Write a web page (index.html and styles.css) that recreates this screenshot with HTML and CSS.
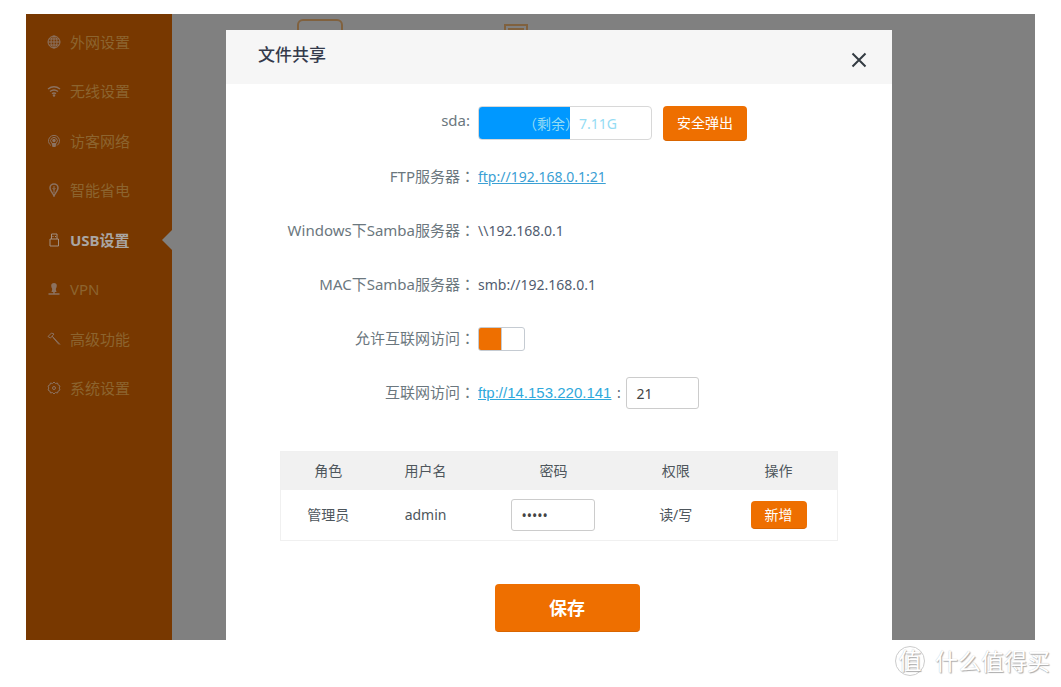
FILE: index.html
```html
<!DOCTYPE html>
<html lang="zh-CN">
<head>
<meta charset="utf-8">
<meta name="viewport" content="width=device-width, initial-scale=1">
<title>文件共享</title>
<link rel="stylesheet" href="styles.css">
</head>
<body>
<div class="app">
  <nav class="sidebar">
    <a class="nav-item" href="#wan"><svg class="nav-icon" viewBox="0 0 14 14"><circle cx="7" cy="7" r="6"/><ellipse cx="7" cy="7" rx="3" ry="6"/><path d="M1 7h12M2 4h10M2 10h10M7 1v12"/></svg>外网设置</a>
    <a class="nav-item" href="#wifi"><svg class="nav-icon" viewBox="0 0 14 14"><path d="M1 5Q7 .5 13 5M3 7.500q4-3.200 8 0M5 9.700q2-1.500 4 0" stroke-width="1.500"/><circle class="solid" cx="7" cy="11.500" r="1.200"/></svg>无线设置</a>
    <a class="nav-item" href="#guest"><svg class="nav-icon" viewBox="0 0 14 14"><path d="M4 11.500a5.500 5.500 0 1 1 6 0M4.600 9a3.300 3.300 0 1 1 4.800 0"/><circle class="solid" cx="7" cy="6.500" r="1.700"/><path class="solid" d="M4.500 9h5l-1 4h-3z"/></svg>访客网络</a>
    <a class="nav-item" href="#power"><svg class="nav-icon" viewBox="0 0 14 14"><path d="M7 13C6 10 3 8 3 4.900a4 4 0 0 1 8 0C11 8 8 10 7 13z" stroke-width="1.500"/><path d="M7 3v7M5.500 5L7 6.500 8.500 5"/></svg>智能省电</a>
    <a class="nav-item active" href="#usb" aria-current="page"><svg class="nav-icon" viewBox="0 0 14 14"><path d="M4.500 6V1h5.500v5M3 6h8.500v7H3zM6 3v1M8.500 3v1"/></svg>USB设置</a>
    <a class="nav-item" href="#vpn"><svg class="nav-icon" viewBox="0 0 14 14"><path class="solid" d="M7 1a2.800 2.800 0 0 1 2.800 2.800c0 1.700-.8 2.200-1 3.400L9.500 10h-5l.7-2.800c-.2-1.200-1-1.700-1-3.400A2.800 2.800 0 0 1 7 1z"/><path d="M1.500 12h11M7 9v3" stroke-width="1.500"/></svg>VPN</a>
    <a class="nav-item" href="#advanced"><svg class="nav-icon" viewBox="0 0 14 14"><path d="M1 4.500L4.500 1l2.500 1-3.500 4zM5 4l8 8.500"/><path d="M6 5.500l6 7"/></svg>高级功能</a>
    <a class="nav-item" href="#system"><svg class="nav-icon" viewBox="0 0 14 14"><path d="M7 1l1.500 1.500 2-.5.700 2L13 5l-.8 2 .8 2-1.800 1-.7 2-2-.5L7 13l-1.500-1.500-2 .5-.7-2L1 9l.8-2L1 5l1.800-1 .7-2 2 .5z"/><circle cx="7" cy="7" r="1.500"/></svg>系统设置</a>
  </nav>

  <div class="stage">
    <svg class="tile tile-wide" viewBox="0 0 46 24"><rect x="1" y="1" width="44" height="40" rx="5"/></svg>
    <svg class="tile tile-small" viewBox="0 0 26 20"><path d="M2 20V2h22v18M6 20V6h14v14"/></svg>

    <section class="dialog" role="dialog" aria-labelledby="dialog-title">
      <header class="dialog-header">
        <h1 class="dialog-title" id="dialog-title">文件共享</h1>
        <button class="close" type="button" aria-label="关闭"><svg class="close-icon" viewBox="0 0 16 16"><path d="M1.500 1.500l13 13M14.500 1.500l-13 13"/></svg></button>
      </header>
      <form class="dialog-body">
        <div class="row">
          <span class="label label-disk">sda:</span>
          <div class="value value-disk">
            <div class="usage"><span class="usage-text">（剩余<span class="colon" lang="zh-TW">）</span>7.11G</span></div>
            <button class="button eject" type="button">安全弹出</button>
          </div>
        </div>
        <div class="row">
          <span class="label">FTP服务器<span class="colon" lang="zh-TW">：</span></span>
          <div class="value"><a class="link" href="ftp://192.168.0.1:21">ftp://192.168.0.1:21</a></div>
        </div>
        <div class="row">
          <span class="label">Windows下Samba服务器<span class="colon" lang="zh-TW">：</span></span>
          <div class="value">\\192.168.0.1</div>
        </div>
        <div class="row">
          <span class="label">MAC下Samba服务器<span class="colon" lang="zh-TW">：</span></span>
          <div class="value">smb://192.168.0.1</div>
        </div>
        <div class="row">
          <label class="label" for="internet">允许互联网访问<span class="colon" lang="zh-TW">：</span></label>
          <div class="value"><input class="switch" id="internet" type="checkbox" checked></div>
        </div>
        <div class="row">
          <label class="label" for="port">互联网访问<span class="colon" lang="zh-TW">：</span></label>
          <div class="value"><a class="link link-public" href="ftp://14.153.220.141">ftp://14.153.220.141</a><span class="port-colon">:</span><input class="field port" id="port" type="text" value="21"></div>
        </div>

        <table class="users">
          <thead>
            <tr><th class="col-role">角色</th><th class="col-name">用户名</th><th class="col-password">密码</th><th class="col-access">权限</th><th class="col-action">操作</th></tr>
          </thead>
          <tbody>
            <tr><td>管理员</td><td>admin</td><td><input class="field password" type="password" value="admin" aria-label="密码"></td><td>读/写</td><td><button class="button add" type="button">新增</button></td></tr>
          </tbody>
        </table>
        <div class="actions"><button class="button save" type="submit">保存</button></div>
      </form>
    </section>
  </div>
</div>
<footer class="watermark"><span class="mark">值</span><span>什么值得买</span></footer>
</body>
</html>
```

FILE: styles.css
```css
* {
  box-sizing: border-box;
}

body {
  margin: 0;
  background: #fff;
  color: #4e565c;
  font: 14px/20px "Noto Sans", "Noto Sans CJK SC", sans-serif;
}

button,
input {
  font: inherit;
}

.app {
  display: flex;
  margin: 14px 26px 0;
  background: #808080;
}

.sidebar {
  display: grid;
  align-content: start;
  grid-template-rows: repeat(8, 1fr);
  flex: 0 0 146px;
  align-self: stretch;
  padding: 3px 0 227px;
  background: #783800;
}

.nav-item {
  position: relative;
  display: flex;
  align-items: center;
  gap: 9px;
  padding-left: 21px;
  color: #8c642f;
  font-size: 15px;
  text-decoration: none;
}

.nav-item.active {
  color: #aaa6a3;
  font-weight: 700;
}

.nav-item.active::after {
  content: "";
  position: absolute;
  right: 0;
  border: 10px solid transparent;
  border-right-color: #808080;
  border-left: 0;
}

.nav-icon {
  width: 14px;
  height: 14px;
  fill: none;
  stroke: #8c7260;
}

.nav-icon .solid {
  fill: #8c7260;
  stroke: none;
}

.nav-item.active .nav-icon {
  stroke: #a18e80;
}

.stage {
  position: relative;
  flex: 1;
  padding: 16px 143px 0 54px;
}

.tile {
  position: absolute;
  fill: none;
  stroke: #80613e;
  stroke-width: 2;
}

.tile-wide {
  top: 5px;
  left: 125px;
  width: 46px;
  height: 24px;
}

.tile-small {
  top: 9px;
  left: 331px;
  width: 26px;
  height: 20px;
}

.dialog {
  position: relative;
  background: #fff;
}

.dialog-header {
  display: flex;
  align-items: center;
  justify-content: space-between;
  height: 54px;
  padding: 0 25px 0 32px;
  background: #f6f6f6;
}

.dialog-title {
  margin: 0 0 4px;
  color: #343a4b;
  font-size: 17px;
  font-weight: 500;
  line-height: 24px;
}

.close {
  display: flex;
  margin-top: 6px;
  padding: 0;
  border: 0;
  background: none;
}

.close-icon {
  width: 16px;
  height: 16px;
  fill: none;
  stroke: #333b42;
  stroke-width: 2;
}

.dialog-body {
  padding: 12px 54px 8px;
}

.row {
  display: grid;
  grid-template-columns: 195px 1fr;
  align-items: center;
  height: 54px;
}

.label {
  padding-bottom: 3px;
  color: #6b777e;
  font-size: 15px;
  text-align: right;
  white-space: nowrap;
}

.label-disk {
  padding: 0 5px 6px 0;
}

.colon {
  font-family: "Noto Sans CJK TC", sans-serif;
}

.value {
  display: flex;
  align-items: center;
  padding-left: 3px;
  color: #515c70;
}

.value-disk {
  gap: 11px;
}

.usage {
  display: flex;
  align-items: center;
  justify-content: center;
  width: 174px;
  height: 34px;
  padding-left: 10px;
  border: 1px solid #d8d8d8;
  border-radius: 4px;
  background: linear-gradient(90deg, #0098ff 92px, #fff 92px) border-box;
}

.usage-text {
  color: #94dcf4;
}

.link {
  color: #3ba0d4;
}

.link-public {
  color: #2fa9dc;
  font-family: "Liberation Sans", sans-serif;
  font-size: 15px;
}

.port-colon {
  width: 15px;
  text-align: center;
}

.switch {
  appearance: none;
  width: 47px;
  height: 24px;
  margin: 0;
  border: 1px solid #c5cbd2;
  border-radius: 3px;
  background: linear-gradient(90deg, #ee6f00 22px, #c5cbd2 22px, #c5cbd2 23px, #fff 23px);
}

.field {
  height: 32px;
  padding: 0 9px;
  border: 1px solid #ccc;
  border-radius: 3px;
  background: #fff;
  color: #444;
}

.port {
  width: 73px;
}

.button {
  padding: 0;
  border: 0;
  border-bottom: 1px solid #d96500;
  border-radius: 4px;
  background: #ee6f00;
  color: #fff;
}

.eject {
  width: 84px;
  height: 35px;
}

.users {
  width: 100%;
  margin-top: 31px;
  border: 1px solid #f0f0f0;
  border-spacing: 0;
  table-layout: fixed;
  text-align: center;
}

.users th {
  height: 38px;
  padding: 0;
  background: #f1f1f1;
  font-weight: 400;
}

.users td {
  height: 50px;
  padding: 0;
}

.col-role {
  width: 17%;
}

.col-name {
  width: 18%;
}

.col-password {
  width: 28%;
}

.col-access {
  width: 16%;
}

.col-action {
  width: 21%;
}

.password {
  width: 84px;
}

.add {
  width: 56px;
  height: 28px;
}

.actions {
  display: flex;
  justify-content: center;
  margin-top: 43px;
  padding-left: 16px;
}

.save {
  width: 145px;
  height: 48px;
  font-size: 18px;
  font-weight: 700;
}

.watermark {
  display: flex;
  align-items: center;
  justify-content: flex-end;
  gap: 10px;
  padding: 6px 11px 0 0;
  color: #fff;
  font-size: 23px;
  line-height: 30px;
  text-shadow: 1px 1px 1px #aaa, 0 0 1px #bbb;
}

.mark {
  width: 30px;
  height: 30px;
  border: 1px solid #ccc;
  border-radius: 50%;
  line-height: 26px;
  text-align: center;
}
```
